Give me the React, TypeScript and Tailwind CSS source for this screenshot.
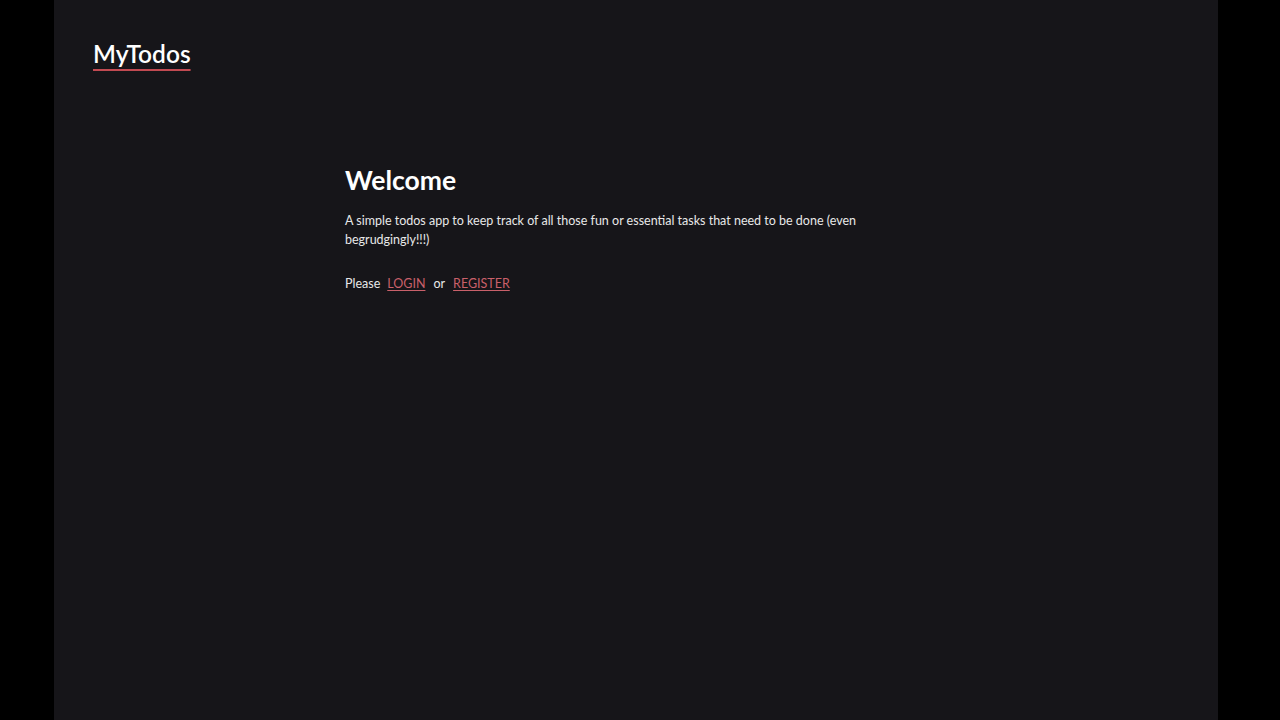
import React from 'react'

export default function App() {
  return (
    <div className="flex h-[720px] w-[1280px] bg-black" style={{ fontFamily: 'Lato, "Noto Sans", sans-serif' }}>
      <div className="w-[54px] shrink-0 bg-black" />
      <div className="flex w-[1164px] flex-col bg-[#161519] text-[#f2f2f2]">
        <header className="px-[39px] pt-[38px]">
          <a className="text-[24.5px] font-semibold leading-[32px] text-white underline decoration-[#c24a52] decoration-2 underline-offset-[6px]">
            MyTodos
          </a>
        </header>
        <main className="ml-[291px] mt-[92px] w-[520px]">
          <h1 className="text-[26.5px] font-bold leading-[36px] text-white">Welcome</h1>
          <p className="mt-[13px] text-[12.5px] leading-[19px] text-[#e8e8e8]">
            A simple todos app to keep track of all those fun or essential tasks that need to be done (even begrudgingly!!!)
          </p>
          <p className="mt-[25px] flex items-baseline text-[12.5px] leading-[19px] text-[#e8e8e8]">
            <span>Please</span>
            <a className="ml-[7px] text-[#c9606a] underline underline-offset-2">LOGIN</a>
            <span className="mx-[8px]">or</span>
            <a className="text-[#c9606a] underline underline-offset-2">REGISTER</a>
          </p>
        </main>
      </div>
      <div className="flex-1 bg-black" />
    </div>
  )
}
